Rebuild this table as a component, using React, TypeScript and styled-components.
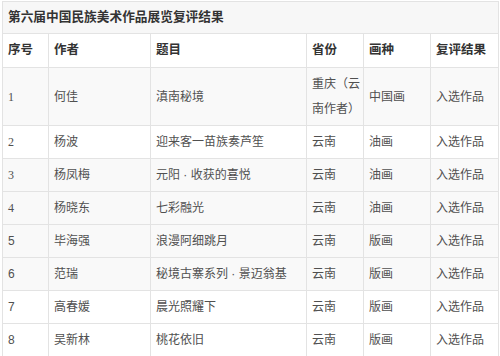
import React, { FC } from "react";
import styled, { createGlobalStyle } from "styled-components";

const GlobalStyle = createGlobalStyle`
  body {
    margin: 0;
    background: #ffffff;
    font-family: "Liberation Sans", "Noto Sans CJK SC", sans-serif;
  }
`;

const Wrapper = styled.div`
  padding: 1px 0 0 2px;
`;

const Table = styled.table`
  width: 496px;
  border-collapse: collapse;
  table-layout: fixed;
  font-size: 12px;
  color: #505050;
`;

const TitleCell = styled.th`
  background-color: #f7f7f7;
  border: 1px solid #e3e3e3;
  padding: 3px 5px;
  line-height: 25px;
  font-size: 12.7px;
  font-weight: bold;
  text-align: left;
  color: #333333;
`;

const HeadCell = styled.th`
  background-color: #ffffff;
  border: 1px solid #e3e3e3;
  padding: 4px 3px 4px 5px;
  line-height: 25px;
  font-size: 12.5px;
  font-weight: bold;
  text-align: left;
  color: #333333;
`;

const Row = styled.tr<{ $shaded?: boolean }>`
  background-color: ${(props) => (props.$shaded ? "#f9f9f9" : "#ffffff")};
`;

const Cell = styled.td<{ $serif?: boolean }>`
  border: 1px solid #e3e3e3;
  padding: 4px 3px 3px 5px;
  line-height: 25px;
  vertical-align: middle;
  font-family: ${(props) =>
    props.$serif
      ? '"Liberation Serif", "Noto Sans CJK SC", serif'
      : '"Liberation Sans", "Noto Sans CJK SC", sans-serif'};
`;

type Entry = {
  no: string;
  author: string;
  title: string;
  province: React.ReactNode;
  kind: string;
  result: string;
  shaded: boolean;
  serif: boolean;
};

const entries: Entry[] = [
  { no: "1", author: "何佳", title: "滇南秘境", province: <>重庆（云<br />南作者）</>, kind: "中国画", result: "入选作品", shaded: true, serif: true },
  { no: "2", author: "杨波", title: "迎来客一苗族奏芦笙", province: "云南", kind: "油画", result: "入选作品", shaded: false, serif: true },
  { no: "3", author: "杨凤梅", title: "元阳 · 收获的喜悦", province: "云南", kind: "油画", result: "入选作品", shaded: true, serif: true },
  { no: "4", author: "杨晓东", title: "七彩融光", province: "云南", kind: "油画", result: "入选作品", shaded: true, serif: true },
  { no: "5", author: "毕海强", title: "浪漫阿细跳月", province: "云南", kind: "版画", result: "入选作品", shaded: true, serif: false },
  { no: "6", author: "范瑞", title: "秘境古寨系列 · 景迈翁基", province: "云南", kind: "版画", result: "入选作品", shaded: true, serif: false },
  { no: "7", author: "高春媛", title: "晨光照耀下", province: "云南", kind: "版画", result: "入选作品", shaded: false, serif: false },
  { no: "8", author: "吴新林", title: "桃花依旧", province: "云南", kind: "版画", result: "入选作品", shaded: false, serif: false },
];

const headers = ["序号", "作者", "题目", "省份", "画种", "复评结果"];
const widths = [46, 102, 156, 57, 67, 68];

const App: FC = () => (
  <>
    <GlobalStyle />
    <Wrapper>
      <Table>
        <colgroup>
          {widths.map((w, i) => (
            <col key={i} style={{ width: w }} />
          ))}
        </colgroup>
        <thead>
          <tr>
            <TitleCell colSpan={6}>第六届中国民族美术作品展览复评结果</TitleCell>
          </tr>
          <tr>
            {headers.map((h) => (
              <HeadCell key={h}>{h}</HeadCell>
            ))}
          </tr>
        </thead>
        <tbody>
          {entries.map((e) => (
            <Row key={e.no} $shaded={e.shaded}>
              <Cell $serif={e.serif}>{e.no}</Cell>
              <Cell>{e.author}</Cell>
              <Cell>{e.title}</Cell>
              <Cell>{e.province}</Cell>
              <Cell>{e.kind}</Cell>
              <Cell>{e.result}</Cell>
            </Row>
          ))}
        </tbody>
      </Table>
    </Wrapper>
  </>
);

export default App;
